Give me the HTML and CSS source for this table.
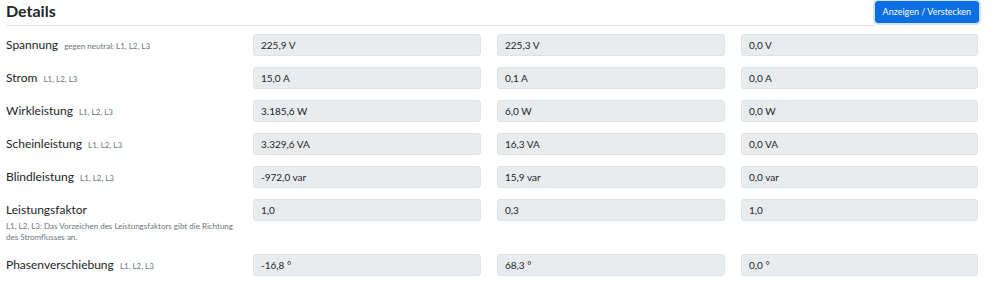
FILE: index.html
```html
<!DOCTYPE html>
<html lang="de">
<head>
<meta charset="utf-8">
<title>Details</title>
<link rel="stylesheet" href="styles.css">
</head>
<body>
<div class="page">
  <div class="header">
    <h3 class="title">Details</h3>
    <button class="btn" type="button">Anzeigen / Verstecken</button>
  </div>
  <div class="grid">
    <div class="label"><span class="name">Spannung</span> <small class="hint">gegen neutral: L1, L2, L3</small></div>
    <div class="field">225,9 V</div>
    <div class="field">225,3 V</div>
    <div class="field">0,0 V</div>

    <div class="label"><span class="name">Strom</span> <small class="hint">L1, L2, L3</small></div>
    <div class="field">15,0 A</div>
    <div class="field">0,1 A</div>
    <div class="field">0,0 A</div>

    <div class="label"><span class="name">Wirkleistung</span> <small class="hint">L1, L2, L3</small></div>
    <div class="field">3.185,6 W</div>
    <div class="field">6,0 W</div>
    <div class="field">0,0 W</div>

    <div class="label"><span class="name">Scheinleistung</span> <small class="hint">L1, L2, L3</small></div>
    <div class="field">3.329,6 VA</div>
    <div class="field">16,3 VA</div>
    <div class="field">0,0 VA</div>

    <div class="label"><span class="name">Blindleistung</span> <small class="hint">L1, L2, L3</small></div>
    <div class="field">-972,0 var</div>
    <div class="field">15,9 var</div>
    <div class="field">0,0 var</div>

    <div class="label"><span class="name">Leistungsfaktor</span><small class="hint block">L1, L2, L3: Das Vorzeichen des Leistungsfaktors gibt die Richtung<br>des Stromflusses an.</small></div>
    <div class="field">1,0</div>
    <div class="field">0,3</div>
    <div class="field">1,0</div>

    <div class="label"><span class="name">Phasenverschiebung</span> <small class="hint">L1, L2, L3</small></div>
    <div class="field">-16,8 °</div>
    <div class="field">68,3 °</div>
    <div class="field">0,0 °</div>
  </div>
</div>
</body>
</html>
```

FILE: styles.css
```css
html, body {
  margin: 0;
  padding: 0;
  background: #ffffff;
}

body {
  font-family: "Lato", "Open Sans", "Liberation Sans", sans-serif;
  color: #212529;
}

.page {
  width: 973px;
  padding: 1px 0 0 6px;
}

.header {
  display: flex;
  align-items: flex-start;
}

.title {
  flex: 1;
  margin: 0;
  height: 24px;
  font-size: 16px;
  font-weight: 700;
  line-height: 20px;
  border-bottom: 1px solid #dee2e6;
}

.btn {
  height: 22px;
  padding: 0 7px;
  border: 1px solid #0b6ee3;
  border-radius: 3px;
  background: #0b6ee3;
  color: #ffffff;
  font-family: inherit;
  font-size: 9px;
  line-height: 20px;
  box-shadow: 0 0 0 2px rgba(13, 110, 253, 0.2);
}

.grid {
  display: grid;
  grid-template-columns: 231px 228px 228px 237px;
  column-gap: 16px;
  row-gap: 11px;
  align-items: start;
  margin-top: 8px;
}

.label {
  font-size: 12px;
  line-height: 22px;
}

.name {
  font-size: 12px;
}

.hint {
  font-size: 8px;
  line-height: 1;
  color: #6c757d;
  margin-left: 3px;
}

.hint.block {
  display: block;
  margin-left: 0;
  line-height: 11px;
}

.field {
  box-sizing: border-box;
  height: 22px;
  padding: 0 7px;
  background: #e9ecef;
  border: 1px solid #dee2e6;
  border-radius: 3px;
  font-size: 10px;
  line-height: 20px;
  color: #212529;
}
```
